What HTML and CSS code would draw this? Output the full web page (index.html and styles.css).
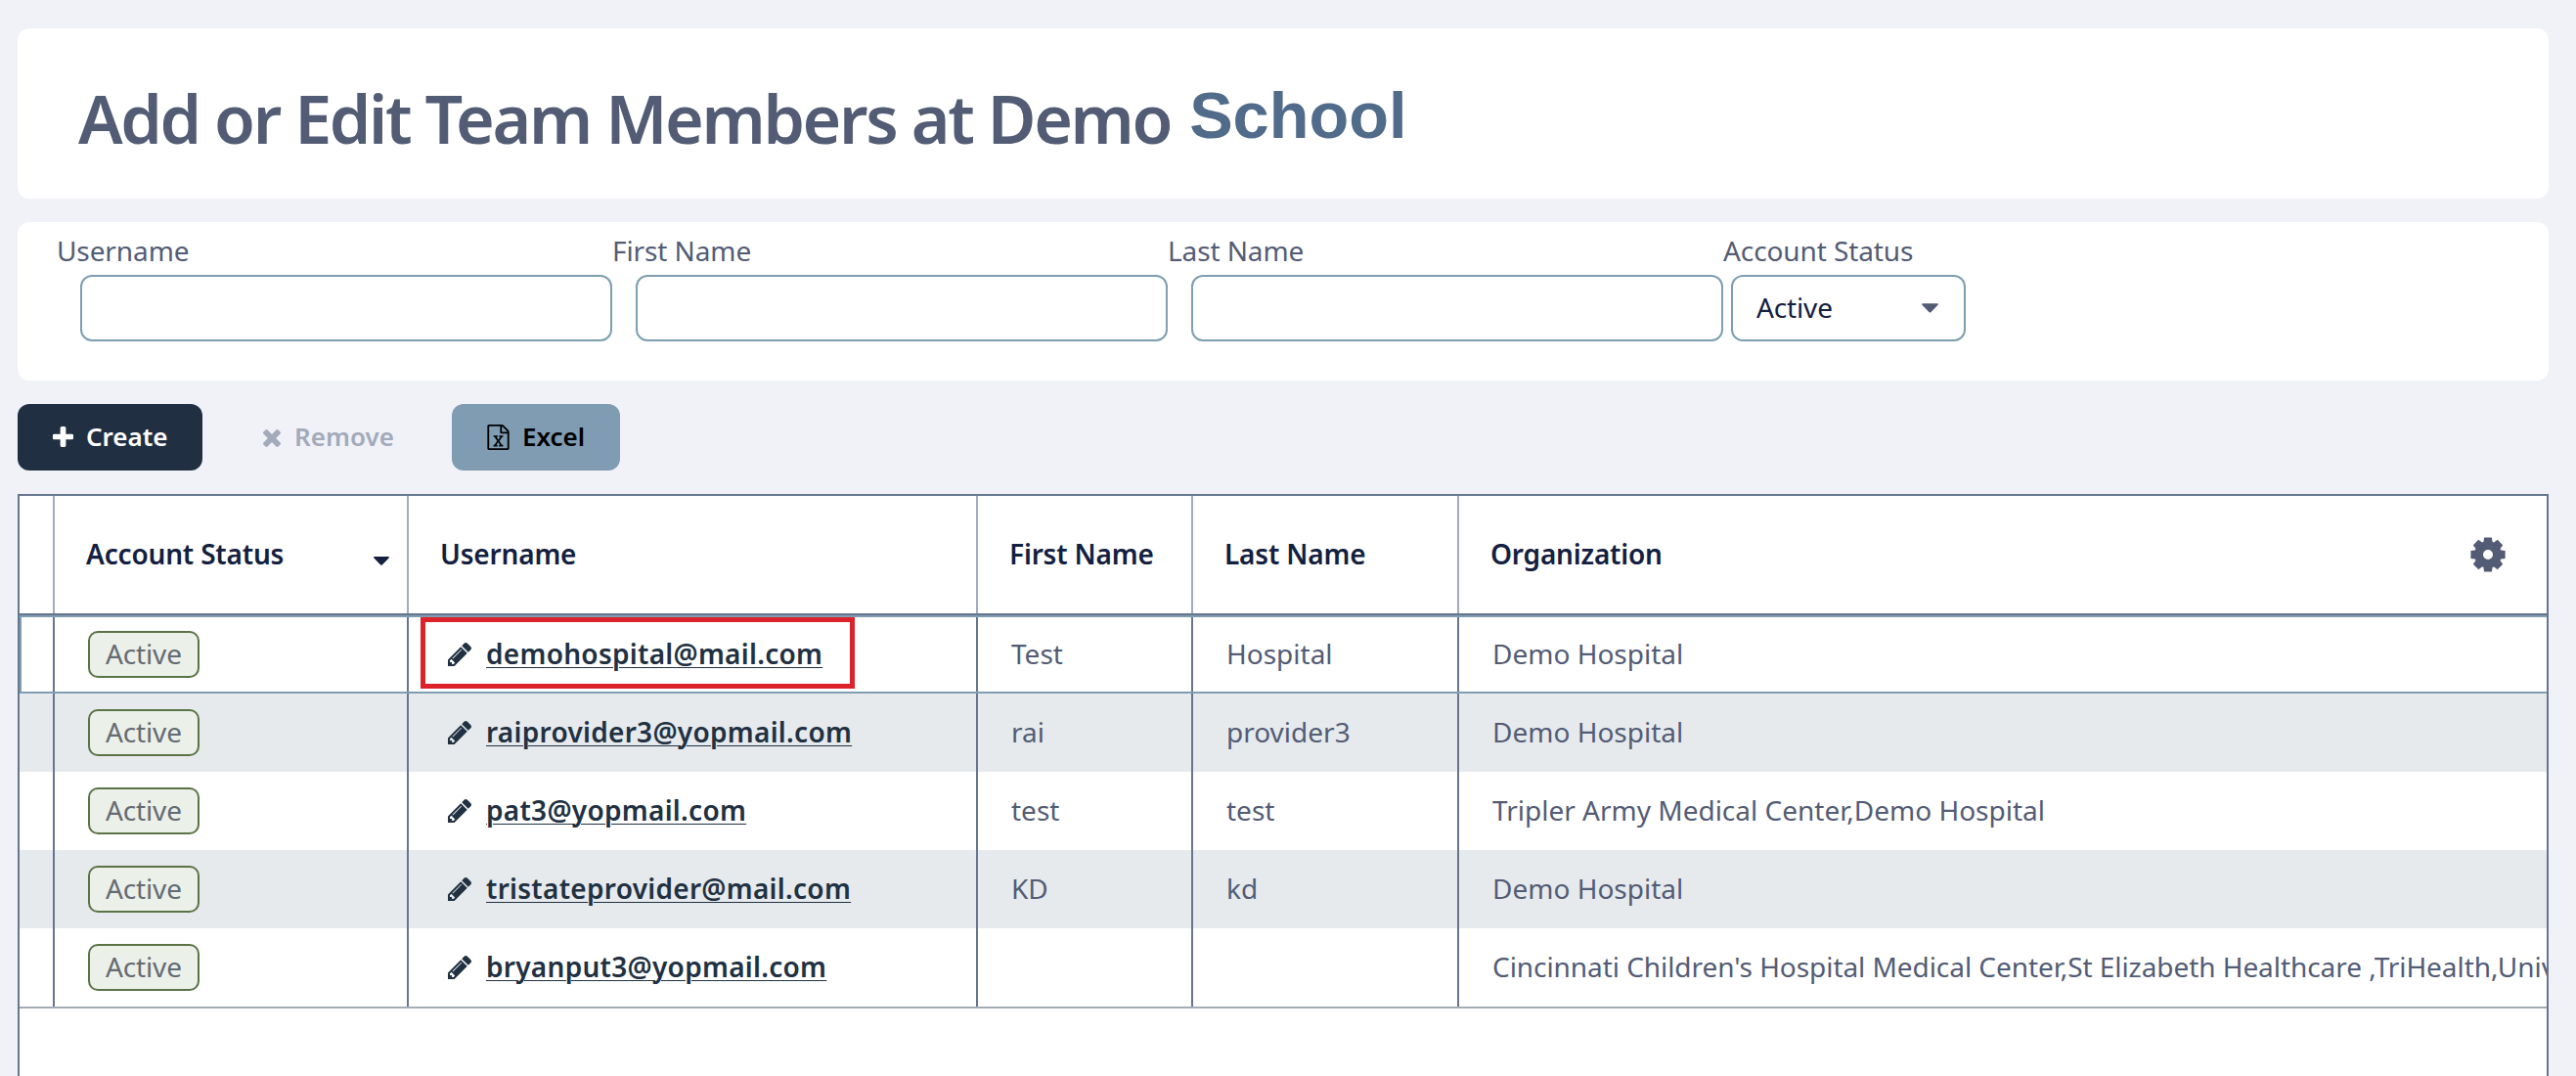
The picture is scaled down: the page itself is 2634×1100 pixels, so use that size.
FILE: index.html
```html
<!DOCTYPE html>
<html lang="en">
<head>
<meta charset="utf-8">
<title>Team Members</title>
<link rel="stylesheet" href="styles.css">
</head>
<body>
<svg class="sprite" aria-hidden="true">
  <symbol id="plus" viewBox="192 128 1408 1408"><path d="M1600 736v192q0 40-28 68t-68 28h-416v416q0 40-28 68t-68 28h-192q-40 0-68-28t-28-68v-416h-416q-40 0-68-28t-28-68v-192q0-40 28-68t68-28h416v-416q0-40 28-68t68-28h192q40 0 68 28t28 68v416h416q40 0 68 28t28 68z"/></symbol>
  <symbol id="times" viewBox="302 366 1188 1188"><path d="M1490 1322q0 40-28 68l-136 136q-28 28-68 28t-68-28l-294-294-294 294q-28 28-68 28t-68-28l-136-136q-28-28-28-68t28-68l294-294-294-294q-28-28-28-68t28-68l136-136q28-28 68-28t68 28l294 294 294-294q28-28 68-28t68 28l136 136q28 28 28 68t-28 68l-294 294 294 294q28 28 28 68z"/></symbol>
  <symbol id="excel" viewBox="128 0 1536 1792"><path d="M1596 380q28 28 48 76t20 88v1152q0 40-28 68t-68 28h-1344q-40 0-68-28t-28-68v-1600q0-40 28-68t68-28h896q40 0 88 20t76 48zM1152 136v376h376q-10-29-22-41l-313-313q-12-12-41-22zM1536 1664v-1024h-416q-40 0-68-28t-28-68v-416h-768v1536h1280zM557 1437v107h281v-107h-75l103-161q5-7 10-16.500t7.500-13.500 3.500-4h2q1 4 5 10 2 4 4.500 7.500t6 8 6.500 8.500l107 161h-76v107h291v-107h-68l-192-273 195-282h67v-107h-279v107h74l-103 159q-4 7-10 16.500t-9 13.500l-2 3h-2q-1-4-5-10-6-11-17-23l-106-159h76v-107h-290v107h68l189 272-194 283h-68z"/></symbol>
  <symbol id="pencil" viewBox="0 149 1515 1515"><path d="M363 1536l91-91-235-235-91 91v107h128v128h107zM886 608q0-22-22-22-10 0-17 7l-542 542q-7 7-7 17 0 22 22 22 10 0 17-7l542-542q7-7 7-17zM832 416l416 416-832 832h-416v-416zM1515 512q0 53-37 90l-166 166-416-416 166-165q36-38 90-38 53 0 91 38l235 234q37 39 37 91z"/></symbol>
  <symbol id="caret" viewBox="0 0 16 9"><path d="M.8 0h14.400q1.200.4.4 1.400l-6.800 7q-.8.8-1.600 0l-6.800-7q-.8-1 .4-1.400z"/></symbol>
  <symbol id="gear" viewBox="0 0 36 36">
    <circle cx="18" cy="18" r="9.400" fill="none" stroke="currentColor" stroke-width="8.800"/>
    <g id="teeth"><path id="tooth" d="M14.100.4h7.800l.9 6h-9.600z"/><use href="#tooth" transform="rotate(90 18 18)"/><use href="#tooth" transform="rotate(180 18 18)"/><use href="#tooth" transform="rotate(270 18 18)"/></g>
    <use href="#teeth" transform="rotate(45 18 18)"/>
  </symbol>
</svg>

<main class="page">
  <header class="card title-card">
    <h1 class="title">Add or Edit Team Members at Demo</h1>
    <span class="title-suffix">School</span>
  </header>

  <form class="card filters">
    <label class="field"><span class="field-label">Username</span><input class="input" type="text"></label>
    <label class="field"><span class="field-label">First Name</span><input class="input" type="text"></label>
    <label class="field"><span class="field-label">Last Name</span><input class="input" type="text"></label>
    <div class="field field-status"><span class="field-label">Account Status</span>
      <div class="select"><span>Active</span><svg class="caret"><use href="#caret"/></svg></div>
    </div>
  </form>

  <div class="toolbar">
    <button class="btn btn-create" type="button"><svg class="icon-plus"><use href="#plus"/></svg><span>Create</span></button>
    <button class="btn btn-remove" type="button"><svg class="icon-times"><use href="#times"/></svg><span>Remove</span></button>
    <button class="btn btn-excel" type="button"><svg class="icon-excel"><use href="#excel"/></svg><span>Excel</span></button>
  </div>

  <section class="grid">
    <div class="row head">
      <div class="cell"></div>
      <div class="cell sorted"><span>Account Status</span><svg class="caret"><use href="#caret"/></svg></div>
      <div class="cell">Username</div>
      <div class="cell">First Name</div>
      <div class="cell">Last Name</div>
      <div class="cell last"><span>Organization</span><svg class="icon-gear"><use href="#gear"/></svg></div>
    </div>
    <div class="row focused">
      <div class="cell"></div>
      <div class="cell"><span class="badge">Active</span></div>
      <div class="cell user marked"><svg class="icon-pencil"><use href="#pencil"/></svg><a class="link">demohospital@mail.com</a></div>
      <div class="cell">Test</div>
      <div class="cell">Hospital</div>
      <div class="cell">Demo Hospital</div>
    </div>
    <div class="row alt">
      <div class="cell"></div>
      <div class="cell"><span class="badge">Active</span></div>
      <div class="cell user"><svg class="icon-pencil"><use href="#pencil"/></svg><a class="link">raiprovider3@yopmail.com</a></div>
      <div class="cell">rai</div>
      <div class="cell">provider3</div>
      <div class="cell">Demo Hospital</div>
    </div>
    <div class="row">
      <div class="cell"></div>
      <div class="cell"><span class="badge">Active</span></div>
      <div class="cell user"><svg class="icon-pencil"><use href="#pencil"/></svg><a class="link">pat3@yopmail.com</a></div>
      <div class="cell">test</div>
      <div class="cell">test</div>
      <div class="cell">Tripler Army Medical Center,Demo Hospital</div>
    </div>
    <div class="row alt">
      <div class="cell"></div>
      <div class="cell"><span class="badge">Active</span></div>
      <div class="cell user"><svg class="icon-pencil"><use href="#pencil"/></svg><a class="link">tristateprovider@mail.com</a></div>
      <div class="cell">KD</div>
      <div class="cell">kd</div>
      <div class="cell">Demo Hospital</div>
    </div>
    <div class="row">
      <div class="cell"></div>
      <div class="cell"><span class="badge">Active</span></div>
      <div class="cell user"><svg class="icon-pencil"><use href="#pencil"/></svg><a class="link">bryanput3@yopmail.com</a></div>
      <div class="cell"></div>
      <div class="cell"></div>
      <div class="cell long">Cincinnati Children's Hospital Medical Center,St Elizabeth Healthcare ,TriHealth,Univ</div>
    </div>
    <div class="grid-end"></div>
  </section>
</main>
</body>
</html>
```
FILE: styles.css
```css
*, *::before, *::after { box-sizing: border-box; }

html, body { height: 100%; }

body {
  margin: 0;
  overflow: hidden;
  background: #f1f2f7;
  color: #535c75;
  font: 400 28px/38px "Noto Sans", "Open Sans", sans-serif;
}

svg { display: block; flex: none; fill: currentColor; }
.sprite { display: none; }

.page {
  display: flex;
  flex-direction: column;
  gap: 24px;
  height: 1100px;
  padding: 29px 28px 0 18px;
}

.card { flex: none; background: #fff; border-radius: 12px; }

/* Title */
.title-card {
  display: flex;
  align-items: flex-start;
  height: 174px;
  padding: 45px 62px 0;
}
.title {
  margin: 0;
  font-size: 68px;
  font-weight: 600;
  line-height: 93px;
  letter-spacing: -2.35px;
  white-space: nowrap;
}
.title-suffix {
  margin-left: 19px;
  padding-top: 6px;
  color: #516b8b;
  font: 700 66.7px/76px "Liberation Sans", Arial, sans-serif;
}

/* Filters */
.filters { display: flex; height: 162px; padding: 10px 40px 0; }
.field { display: flex; flex-direction: column; gap: 6px; width: 568px; }
.field-label { height: 38px; letter-spacing: -.1px; white-space: nowrap; }
.input, .select {
  height: 68px;
  border: 2px solid #7d9fb1;
  border-radius: 12px;
  background: #fff;
}
.field-status { width: 248px; }
.input { width: 544px; margin: 0 0 0 24px; padding: 0 24px; font: inherit; }
.select {
  display: flex;
  align-items: center;
  justify-content: space-between;
  width: 240px;
  margin-left: 8px;
  padding: 0 26px 0 24px;
  color: #13203f;
  letter-spacing: -.15px;
}
.select span { padding-bottom: 2px; }
.caret { width: 16px; height: 9px; }
.select .caret { width: 17px; height: 10px; color: #535c75; }

/* Toolbar */
.toolbar { display: flex; flex: none; gap: 24px; }
.btn {
  display: flex;
  align-items: center;
  gap: 13px;
  height: 68px;
  margin: 0;
  padding: 0 36px;
  border: 0;
  border-radius: 12px;
  background: none;
  font: 600 26px/36px "Noto Sans", "Open Sans", sans-serif;
}
.btn span { padding-bottom: 2px; }
.btn-create { width: 189px; color: #fff; background: #203042; }
.btn-remove { width: 207px; color: #a2aabb; }
.btn-excel { width: 172px; color: #000; background: #7f9cb2; }
.icon-plus { width: 21px; height: 21px; margin-top: -2px; }
.icon-times { width: 18px; height: 18px; margin: 1px 1px 0 2px; }
.icon-excel { width: 23px; height: 26px; }

/* Data grid */
.grid {
  flex: 1;
  min-height: 0;
  border: 2px solid #67768f;
  border-bottom: 0;
  background: #fff;
  overflow: hidden;
}
.row {
  display: grid;
  grid-template-columns: 36px 362px 582px 220px 272px minmax(0, 1fr);
  height: 80px;
}
.alt { background: #e6eaed; }
.cell {
  display: flex;
  align-items: center;
  min-width: 0;
  padding: 0 0 2px 34px;
  border-right: 2px solid #67768f;
  white-space: nowrap;
  overflow: hidden;
}
.cell:last-child { border-right: 0; }
.long { letter-spacing: -.06px; }

.head {
  height: 122px;
  border-bottom: 2px solid #67768f;
  color: #13203f;
  font-weight: 600;
  letter-spacing: -.18px;
}
.head .cell { padding-left: 32px; border-right-color: #a2abbf; }
.head .sorted, .head .last { justify-content: space-between; }
.sorted .caret { margin: 15px 18px 0 0; }
.icon-gear { width: 36px; height: 36px; margin: 2px 42px 0 0; color: #535c75; }

.focused { box-shadow: inset 2px 2px #7f9eb1, inset 0 -2px #7f9eb1; }
.focused .cell { margin: 2px 0; }

.badge {
  width: 114px;
  height: 48px;
  margin-top: 2px;
  padding: 2px 16px;
  border: 2px solid #5b7347;
  border-radius: 10px;
  background: #ebf0e9;
  color: #646b73;
  letter-spacing: -.15px;
}

.user { position: relative; gap: 15px; padding-left: 40px; color: #213142; }
.icon-pencil { width: 24px; height: 24px; margin-top: 2px; }
.link {
  font-weight: 600;
  letter-spacing: .28px;
  text-decoration: underline;
  text-decoration-thickness: 1px;
  text-underline-offset: 3px;
}
.marked::after {
  content: "";
  position: absolute;
  top: 0;
  left: 12px;
  width: 444px;
  height: 73px;
  border: 5px solid #dc232b;
}

.grid-end { height: 2px; background: #a2abb6; }
```
